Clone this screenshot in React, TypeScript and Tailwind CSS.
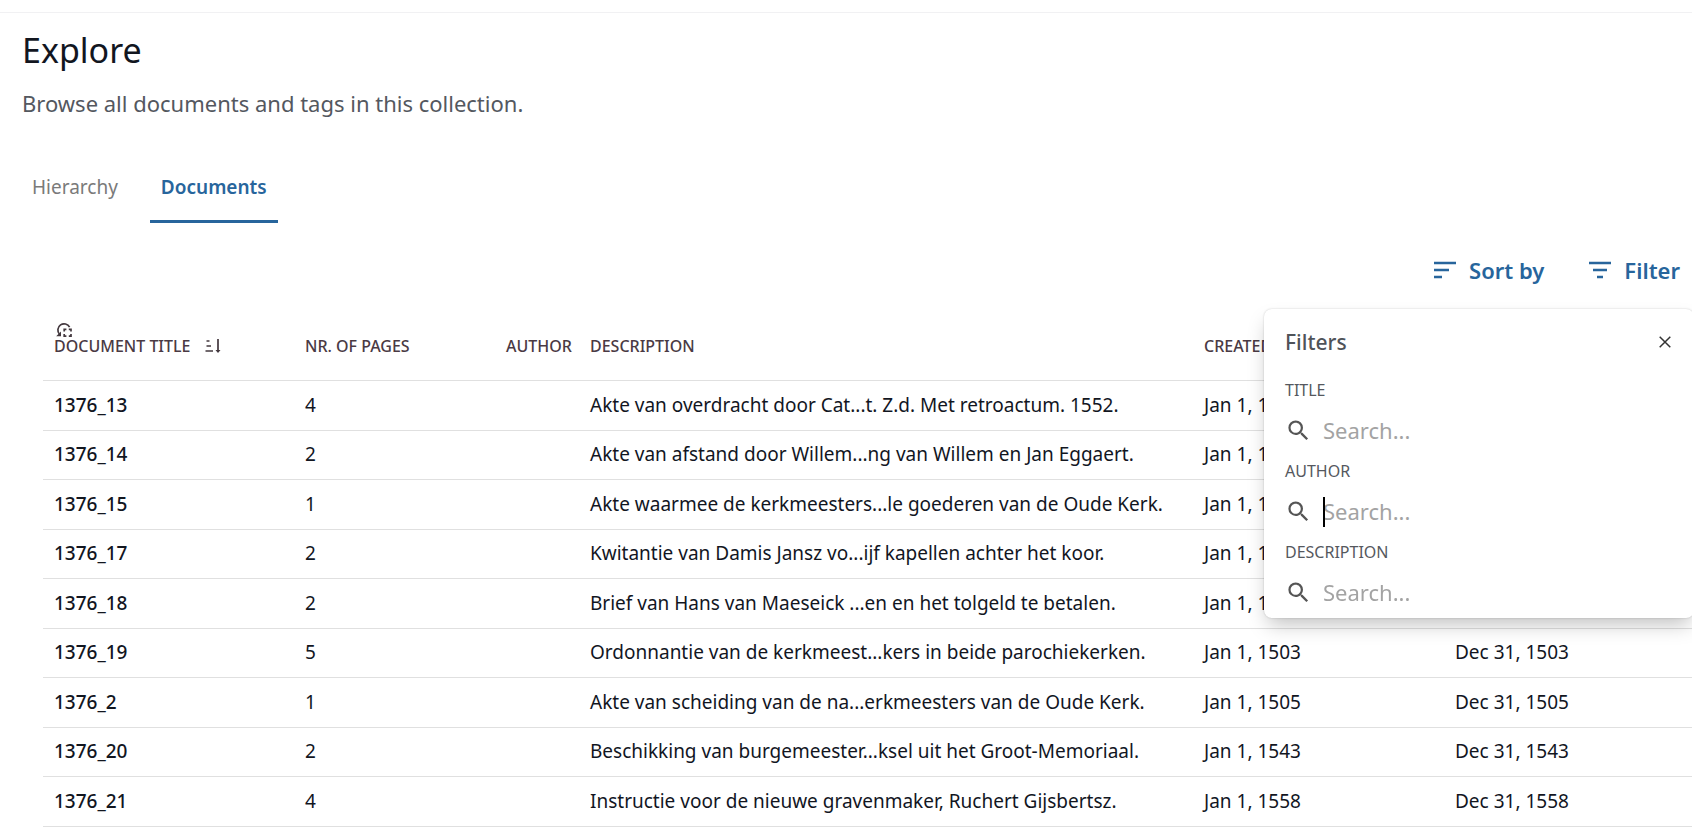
import React, { useEffect, useRef } from "react";

type Doc = { title: string; pages: number; description: string; year: number };

const documents: Doc[] = [
  { title: "1376_13", pages: 4, description: "Akte van overdracht door Cat...t. Z.d. Met retroactum. 1552.", year: 1552 },
  { title: "1376_14", pages: 2, description: "Akte van afstand door Willem...ng van Willem en Jan Eggaert.", year: 1411 },
  { title: "1376_15", pages: 1, description: "Akte waarmee de kerkmeesters...le goederen van de Oude Kerk.", year: 1501 },
  { title: "1376_17", pages: 2, description: "Kwitantie van Damis Jansz vo...ijf kapellen achter het koor.", year: 1502 },
  { title: "1376_18", pages: 2, description: "Brief van Hans van Maeseick ...en en het tolgeld te betalen.", year: 1502 },
  { title: "1376_19", pages: 5, description: "Ordonnantie van de kerkmeest...kers in beide parochiekerken.", year: 1503 },
  { title: "1376_2", pages: 1, description: "Akte van scheiding van de na...erkmeesters van de Oude Kerk.", year: 1505 },
  { title: "1376_20", pages: 2, description: "Beschikking van burgemeester...ksel uit het Groot-Memoriaal.", year: 1543 },
  { title: "1376_21", pages: 4, description: "Instructie voor de nieuwe gravenmaker, Ruchert Gijsbertsz.", year: 1558 },
];

function SearchIcon() {
  return (
    <svg viewBox="0 0 24 24" className="size-[27px] shrink-0 fill-[#555555]" aria-hidden="true">
      <path d="M15.5 14h-.79l-.28-.27A6.47 6.47 0 0 0 16 9.5 6.5 6.5 0 1 0 9.5 16c1.61 0 3.09-.59 4.23-1.57l.27.28v.79l5 4.99L20.49 19l-4.99-5zm-6 0C7.01 14 5 11.99 5 9.5S7.01 5 9.5 5 14 7.01 14 9.5 11.99 14 9.5 14z" />
    </svg>
  );
}

function SelectAllIcon() {
  return (
    <svg viewBox="0 0 16 16" className="size-4" fill="none" stroke="#43383e" strokeWidth="1.7" aria-hidden="true">
      <path d="M3.5 13.2A6.2 6.2 0 1 1 13.6 6.2" />
      <path d="M.2 15.3h4.800V10.500z" fill="#43383e" stroke="none" />
      <path d="M8.200 10.500V8.300h2.200M12.800 8.300H15v2.200M15 12.900v2.200h-2.200M10.400 15.100H8.200v-2.200" />
    </svg>
  );
}

function SortDirectionIcon() {
  return (
    <svg viewBox="0 0 16 16" className="size-4" fill="none" stroke="#43383e" strokeWidth="1.7" aria-hidden="true">
      <path d="M1.500 3h3M1.500 8h4.500M.5 13h7.500M13 1v13" />
      <path d="M10.500 12 13 15l2.500-3z" fill="#43383e" stroke="none" />
    </svg>
  );
}

function FilterField({ label, focused = false }: { label: string; focused?: boolean }) {
  const ref = useRef<HTMLInputElement>(null);
  const id = "filter-" + label.toLowerCase();
  useEffect(() => {
    if (focused) ref.current?.focus();
  }, [focused]);
  return (
    <div>
      <label htmlFor={id} className="block text-base leading-[22px] uppercase text-[#55585e]">{label}</label>
      <div className="flex h-[59px] items-center gap-[11px]">
        <SearchIcon />
        <div className="relative flex min-w-0 flex-1">
          <input
            id={id}
            ref={ref}
            type="text"
            placeholder="Search..."
            className="w-full bg-transparent pb-0.5 text-[22px] leading-7 text-black caret-transparent placeholder-[#a3a3a3] outline-none"
          />
          {focused && <span className="absolute inset-y-0 left-0 w-0.5 bg-black" aria-hidden="true" />}
        </div>
      </div>
    </div>
  );
}

export default function App() {
  return (
    <div className="h-screen overflow-hidden bg-white pt-3 font-['Noto_Sans',sans-serif] text-[#12161f]">
      <div className="border-t border-[#f1f1f3]">
        <header className="px-[22px] pt-[15px]">
          <h1 className="text-[34px] leading-[44px]">Explore</h1>
          <p className="mt-[15px] text-[22px] leading-8 text-[#54585f]">Browse all documents and tags in this collection.</p>
        </header>

        <nav className="mt-[46px] flex gap-[21px] px-[21px] text-[19px] leading-7" role="tablist">
          <button role="tab" aria-selected="false" className="h-[58px] border-b-3 border-transparent px-[11px] pb-3 text-[#7a7a7a]">Hierarchy</button>
          <button role="tab" aria-selected="true" className="h-[58px] border-b-3 border-[#27659c] px-[11px] pb-3 font-semibold text-[#27659c]">Documents</button>
        </nav>

        <div className="relative">
          <div className="flex h-24 items-center justify-end gap-11 pr-3 pb-0.5 text-[22px] leading-7 font-semibold text-[#27659c]">
            <button className="flex items-center gap-3">
              <svg viewBox="0 0 24 20" className="h-5 w-6" fill="none" stroke="currentColor" strokeWidth="2.500" aria-hidden="true">
                <path d="M1 3h22M1 10h15M1 17h8" />
              </svg>
              Sort by
            </button>
            <button className="flex items-center gap-3">
              <svg viewBox="0 0 24 20" className="h-5 w-6" fill="none" stroke="currentColor" strokeWidth="2.500" aria-hidden="true">
                <path d="M1 3h22M5 10h14M9 17h6" />
              </svg>
              Filter
            </button>
          </div>

          <section aria-label="Filters" className="absolute top-[86px] -right-0.5 z-10 h-[309px] w-[430px] rounded-lg bg-white pt-[17px] pr-[19px] pl-[21px] shadow-[0_0_2px_rgba(0,0,0,0.2),0_10px_20px_-4px_rgba(0,0,0,0.25)]">
            <div className="mb-[21px] flex items-center justify-between">
              <h2 className="text-[21px] leading-8 font-medium text-[#4f5359]">Filters</h2>
              <button aria-label="Close filters" className="flex size-5 items-center justify-center">
                <svg viewBox="0 0 12 12" className="size-3" stroke="#333" strokeWidth="1.5" aria-hidden="true">
                  <path d="M.7.7l10.600 10.600M11.300.7.7 11.300" />
                </svg>
              </button>
            </div>
            <FilterField label="Title" />
            <FilterField label="Author" focused />
            <FilterField label="Description" />
          </section>

          <div className="pl-[43px]">
            <table className="w-full table-fixed border-collapse text-left text-[19px]">
              <colgroup>
                <col className="w-[251px]" />
                <col className="w-[201px]" />
                <col className="w-[84px]" />
                <col className="w-[614px]" />
                <col className="w-[251px]" />
                <col />
              </colgroup>
              <thead>
                <tr className="h-[61px] border-b border-[#e0e0e0] align-top text-base leading-[22px] text-[#4a3a44] [&>th]:pl-[11px] [&>th]:font-medium [&>th]:whitespace-nowrap">
                  <th>
                    <div className="relative flex items-center gap-[15px] pt-4">
                      <span className="absolute top-0.5 left-0.5"><SelectAllIcon /></span>
                      DOCUMENT TITLE
                      <SortDirectionIcon />
                    </div>
                  </th>
                  <th className="pt-4">NR. OF PAGES</th>
                  <th className="pt-4">AUTHOR</th>
                  <th className="pt-4">DESCRIPTION</th>
                  <th className="pt-4">CREATED FROM</th>
                  <th className="pt-4">CREATED TO</th>
                </tr>
              </thead>
              <tbody>
                {documents.map((d) => (
                  <tr key={d.title} className="h-[49px] border-b border-[#e0e0e0] leading-7 whitespace-nowrap odd:h-[50px] [&>td]:pb-px [&>td]:pl-[11px] [&>th]:pb-px [&>th]:pl-[11px]">
                    <th scope="row" className="font-medium">{d.title}</th>
                    <td>{d.pages}</td>
                    <td></td>
                    <td>{d.description}</td>
                    <td>Jan 1, {d.year}</td>
                    <td>Dec 31, {d.year}</td>
                  </tr>
                ))}
              </tbody>
            </table>
          </div>
        </div>
      </div>
    </div>
  );
}
